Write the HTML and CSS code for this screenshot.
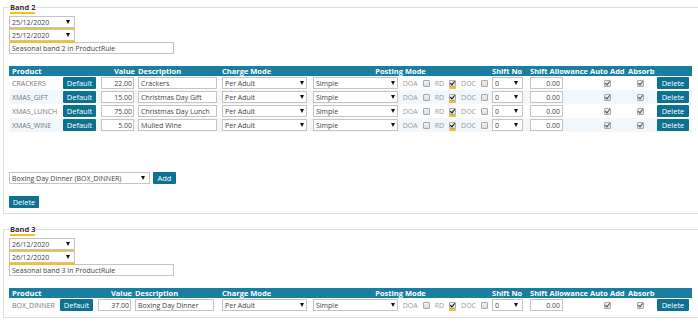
FILE: index.html
```html
<!DOCTYPE html>
<html lang="en">
<head>
    <meta charset="UTF-8">
    <title>Seasonal Bands</title>
    <link rel="stylesheet" href="styles.css">
</head>
<body>
    <fieldset class="band">
        <legend><span class="mark">Band 2</span></legend>
        <div class="stack">
            <span class="sel date mark"><select class="ctl"><option>25/12/2020</option></select></span>
            <span class="sel date mark"><select class="ctl"><option>25/12/2020</option></select></span>
            <input class="ctl note" value="Seasonal band 2 in ProductRule">
        </div>
        <table class="grid">
            <colgroup>
                <col class="c-prod"><col class="c-def"><col class="c-val"><col class="c-desc"><col class="c-charge">
                <col class="c-post"><col class="c-shift"><col class="c-allow"><col class="c-auto"><col class="c-abs"><col class="c-del">
            </colgroup>
            <thead>
                <tr>
                    <th class="first">Product</th><th></th><th class="num">Value</th><th>Description</th><th>Charge Mode</th>
                    <th class="mid">Posting Mode</th><th>Shift No</th><th>Shift Allowance</th><th>Auto Add</th><th>Absorb</th><th></th>
                </tr>
            </thead>
            <tbody>
                <tr>
                    <td class="code">CRACKERS</td>
                    <td><button class="btn def">Default</button></td>
                    <td><input class="ctl val" value="22.00"></td>
                    <td><input class="ctl text" value="Crackers"></td>
                    <td><span class="sel charge"><select class="ctl"><option>Per Adult</option></select></span></td>
                    <td>
                        <div class="posting">
                            <span class="sel post"><select class="ctl"><option>Simple</option></select></span>
                            <span class="opt">DOA <span class="cb"></span></span>
                            <span class="opt">RD <span class="cb on mark"></span></span>
                            <span class="opt">DOC <span class="cb"></span></span>
                        </div>
                    </td>
                    <td><span class="sel shift"><select class="ctl"><option>0</option></select></span></td>
                    <td><input class="ctl allow" value="0.00"></td>
                    <td class="mid"><span class="cb on dis"></span></td>
                    <td class="mid"><span class="cb on dis"></span></td>
                    <td><button class="btn del">Delete</button></td>
                </tr>
                <tr>
                    <td class="code">XMAS_GIFT</td>
                    <td><button class="btn def">Default</button></td>
                    <td><input class="ctl val" value="15.00"></td>
                    <td><input class="ctl text" value="Christmas Day Gift"></td>
                    <td><span class="sel charge"><select class="ctl"><option>Per Adult</option></select></span></td>
                    <td>
                        <div class="posting">
                            <span class="sel post"><select class="ctl"><option>Simple</option></select></span>
                            <span class="opt">DOA <span class="cb"></span></span>
                            <span class="opt">RD <span class="cb on mark"></span></span>
                            <span class="opt">DOC <span class="cb"></span></span>
                        </div>
                    </td>
                    <td><span class="sel shift"><select class="ctl"><option>0</option></select></span></td>
                    <td><input class="ctl allow" value="0.00"></td>
                    <td class="mid"><span class="cb on dis"></span></td>
                    <td class="mid"><span class="cb on dis"></span></td>
                    <td><button class="btn del">Delete</button></td>
                </tr>
                <tr>
                    <td class="code">XMAS_LUNCH</td>
                    <td><button class="btn def">Default</button></td>
                    <td><input class="ctl val" value="75.00"></td>
                    <td><input class="ctl text" value="Christmas Day Lunch"></td>
                    <td><span class="sel charge"><select class="ctl"><option>Per Adult</option></select></span></td>
                    <td>
                        <div class="posting">
                            <span class="sel post"><select class="ctl"><option>Simple</option></select></span>
                            <span class="opt">DOA <span class="cb"></span></span>
                            <span class="opt">RD <span class="cb on mark"></span></span>
                            <span class="opt">DOC <span class="cb"></span></span>
                        </div>
                    </td>
                    <td><span class="sel shift"><select class="ctl"><option>0</option></select></span></td>
                    <td><input class="ctl allow" value="0.00"></td>
                    <td class="mid"><span class="cb on dis"></span></td>
                    <td class="mid"><span class="cb on dis"></span></td>
                    <td><button class="btn del">Delete</button></td>
                </tr>
                <tr>
                    <td class="code">XMAS_WINE</td>
                    <td><button class="btn def">Default</button></td>
                    <td><input class="ctl val" value="5.00"></td>
                    <td><input class="ctl text" value="Mulled Wine"></td>
                    <td><span class="sel charge"><select class="ctl"><option>Per Adult</option></select></span></td>
                    <td>
                        <div class="posting">
                            <span class="sel post"><select class="ctl"><option>Simple</option></select></span>
                            <span class="opt">DOA <span class="cb"></span></span>
                            <span class="opt">RD <span class="cb on mark"></span></span>
                            <span class="opt">DOC <span class="cb"></span></span>
                        </div>
                    </td>
                    <td><span class="sel shift"><select class="ctl"><option>0</option></select></span></td>
                    <td><input class="ctl allow" value="0.00"></td>
                    <td class="mid"><span class="cb on dis"></span></td>
                    <td class="mid"><span class="cb on dis"></span></td>
                    <td><button class="btn del">Delete</button></td>
                </tr>
            </tbody>
        </table>
        <div class="add-row">
            <span class="sel pick"><select class="ctl"><option>Boxing Day Dinner (BOX_DINNER)</option></select></span>
            <button class="btn add">Add</button>
        </div>
        <button class="btn remove">Delete</button>
    </fieldset>

    <fieldset class="band">
        <legend><span class="mark">Band 3</span></legend>
        <div class="stack">
            <span class="sel date mark"><select class="ctl"><option>26/12/2020</option></select></span>
            <span class="sel date mark"><select class="ctl"><option>26/12/2020</option></select></span>
            <input class="ctl note" value="Seasonal band 3 in ProductRule">
        </div>
        <table class="grid">
            <colgroup>
                <col class="c-prod short"><col class="c-def"><col class="c-val"><col class="c-desc wide"><col class="c-charge">
                <col class="c-post"><col class="c-shift"><col class="c-allow"><col class="c-auto"><col class="c-abs"><col class="c-del">
            </colgroup>
            <thead>
                <tr>
                    <th class="first">Product</th><th></th><th class="num">Value</th><th>Description</th><th>Charge Mode</th>
                    <th class="mid">Posting Mode</th><th>Shift No</th><th>Shift Allowance</th><th>Auto Add</th><th>Absorb</th><th></th>
                </tr>
            </thead>
            <tbody>
                <tr>
                    <td class="code">BOX_DINNER</td>
                    <td><button class="btn def">Default</button></td>
                    <td><input class="ctl val" value="37.00"></td>
                    <td><input class="ctl text" value="Boxing Day Dinner"></td>
                    <td><span class="sel charge"><select class="ctl"><option>Per Adult</option></select></span></td>
                    <td>
                        <div class="posting">
                            <span class="sel post"><select class="ctl"><option>Simple</option></select></span>
                            <span class="opt">DOA <span class="cb"></span></span>
                            <span class="opt">RD <span class="cb on mark"></span></span>
                            <span class="opt">DOC <span class="cb"></span></span>
                        </div>
                    </td>
                    <td><span class="sel shift"><select class="ctl"><option>0</option></select></span></td>
                    <td><input class="ctl allow" value="0.00"></td>
                    <td class="mid"><span class="cb on dis"></span></td>
                    <td class="mid"><span class="cb on dis"></span></td>
                    <td><button class="btn del">Delete</button></td>
                </tr>
            </tbody>
        </table>
    </fieldset>
</body>
</html>
```

FILE: styles.css
```css
body {
    margin: 0;
    font-family: "Open Sans", sans-serif;
    font-size: 7px;
    color: #333;
    background-color: #fff;
    overflow: hidden;
}
/* bloque de cada banda, sigue mas alla del borde derecho */
.band {
    margin: 2px 0 10px 3px;
    padding: 0 5px 5px 5px;
    border: 1px solid #ddd;
    border-right: none;
    min-width: 0;
}
.band legend {
    padding: 0 1px;
    font-weight: bold;
    font-size: 7.5px;
    line-height: 10px;
    color: #333;
}
.mark {
    box-shadow: 0 2px 0 #f5c211;
}
.stack {
    display: flex;
    flex-direction: column;
    align-items: flex-start;
    margin-top: 4px;
}
.ctl {
    box-sizing: border-box;
    height: 12px;
    margin: 0;
    padding: 0 2px;
    border: 1px solid #c4c4c4;
    background-color: #fff;
    font-family: inherit;
    font-size: 7px;
    color: #444;
    outline: none;
}
/* select con triangulo propio */
.sel {
    position: relative;
    display: inline-block;
    height: 12px;
}
.sel select {
    width: 100%;
    appearance: none;
    -webkit-appearance: none;
    border-radius: 0;
}
.sel::after {
    content: "";
    position: absolute;
    top: 4px;
    right: 5px;
    border-left: 2.5px solid transparent;
    border-right: 2.5px solid transparent;
    border-top: 4px solid #111;
    pointer-events: none;
}
.date {
    width: 66px;
    margin-bottom: 1px;
}
.note {
    width: 165px;
}
.grid {
    width: 683px;
    margin-top: 12px;
    border-collapse: collapse;
    table-layout: fixed;
}
.c-prod { width: 53px; }
.c-prod.short { width: 50px; }
.c-def { width: 38px; }
.c-val { width: 36px; }
.c-desc { width: 84px; }
.c-desc.wide { width: 87px; }
.c-charge { width: 91px; }
.c-post { width: 179px; }
.c-shift { width: 38px; }
.c-allow { width: 60px; }
.c-auto { width: 38px; }
.c-abs { width: 29px; }
.c-del { width: 37px; }
.grid th {
    height: 10px;
    padding: 0 2px;
    background-color: #1a7ea1;
    color: #fff;
    font-weight: bold;
    font-size: 7.5px;
    line-height: 10px;
    text-align: left;
    white-space: nowrap;
}
.grid th.first {
    padding-left: 3px;
}
.grid th.num {
    text-align: right;
    padding-right: 1px;
}
.grid .mid {
    text-align: center;
}
.grid td {
    height: 14px;
    padding: 0 2px;
    vertical-align: middle;
    white-space: nowrap;
}
.grid tbody tr:nth-child(even) td {
    background-color: #f1f7fb;
}
.grid td.code {
    padding-left: 3px;
    color: #777;
}
.grid td .sel,
.grid td .ctl,
.grid td .btn {
    vertical-align: middle;
}
.btn {
    height: 12px;
    padding: 0;
    border: none;
    border-radius: 1px;
    background-color: #0e7192;
    color: #fff;
    font-family: inherit;
    font-size: 7.5px;
    cursor: pointer;
}
.def {
    width: 33px;
    margin-left: -1px;
}
.del {
    width: 32px;
}
.val {
    width: 33px;
    margin-left: -1px;
    text-align: right;
    padding-right: 1px;
}
.text {
    width: 79px;
}
.charge {
    width: 85px;
}
.charge::after {
    right: 3px;
}
.posting {
    display: flex;
    align-items: center;
}
.post {
    width: 85px;
}
.post::after {
    right: 3px;
}
.opt {
    display: inline-flex;
    align-items: center;
    gap: 5px;
    margin-left: 5px;
    color: #999;
}
.shift {
    width: 31px;
}
.allow {
    width: 33px;
    text-align: right;
}
/* casillas */
.cb {
    position: relative;
    display: inline-block;
    box-sizing: border-box;
    width: 7px;
    height: 7px;
    border: 1px solid #a9a9a9;
    border-radius: 1px;
    background: linear-gradient(#f2f2f2, #dcdcdc);
    vertical-align: middle;
}
.cb.on::after {
    content: "";
    position: absolute;
    left: 1px;
    top: -1px;
    width: 2px;
    height: 4px;
    border-right: 1.2px solid #111;
    border-bottom: 1.2px solid #111;
    transform: rotate(40deg);
}
.cb.dis::after {
    border-color: #555;
}
.add-row {
    display: flex;
    align-items: center;
    gap: 3px;
    margin-top: 40px;
}
.pick {
    width: 141px;
}
.add {
    width: 23px;
}
.remove {
    width: 30px;
    margin-top: 12px;
}
```
